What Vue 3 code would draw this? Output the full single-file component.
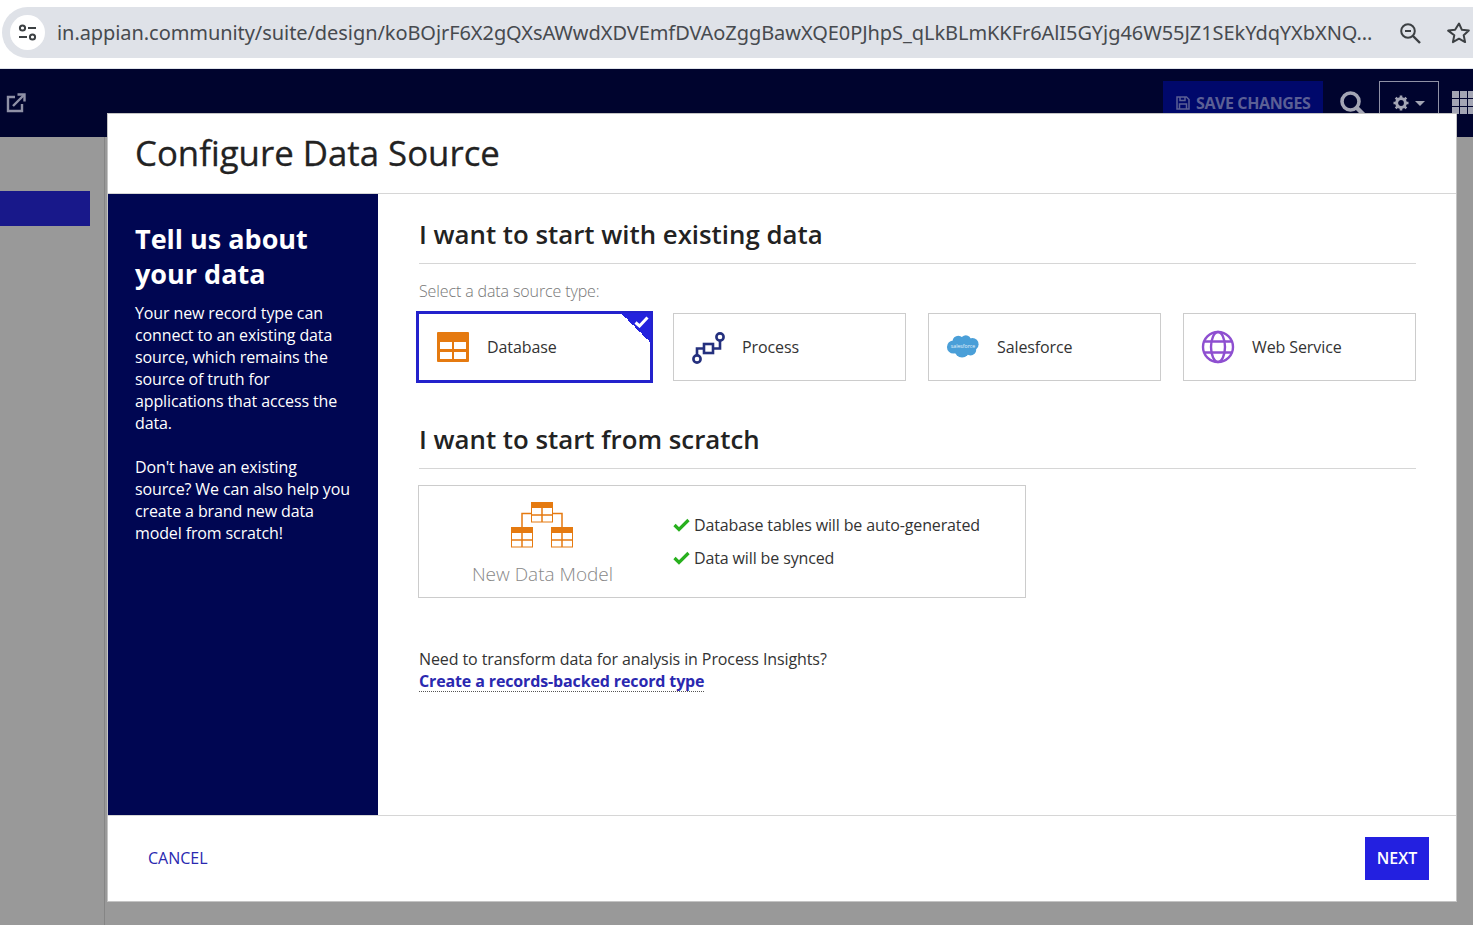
<script setup>
const sources = [
  { name: 'Database', icon: 'database', selected: true },
  { name: 'Process', icon: 'process', selected: false },
  { name: 'Salesforce', icon: 'salesforce', selected: false },
  { name: 'Web Service', icon: 'globe', selected: false }
];

const url = 'in.appian.community/suite/design/koBOjrF6X2gQXsAWwdXDVEmfDVAoZggBawXQE0PJhpS_qLkBLmKKFr6AlI5GYjg46W55JZ1SEkYdqYXbXNQ...';

const introOne = 'Your new record type can connect to an existing data source, which remains the source of truth for applications that access the data.';
const introTwo = "Don't have an existing source? We can also help you create a brand new data model from scratch!";

const benefits = ['Database tables will be auto-generated', 'Data will be synced'];

// small table glyphs of the data model icon
const modelTables = [
  { x: 20, y: 0 },
  { x: 0, y: 25 },
  { x: 40, y: 25 }
];
</script>

<template>
  <div class="page">
    <div class="browser">
      <div class="omnibox">
        <div class="site-btn">
          <svg width="20" height="18" viewBox="0 0 20 18" fill="none" stroke="#3c4043" stroke-width="2">
            <circle cx="4.5" cy="4" r="2.6" />
            <path d="M10 4h8" />
            <path d="M1 13h8" />
            <circle cx="14.5" cy="13" r="2.6" />
          </svg>
        </div>
        <div class="url">{{ url }}</div>
        <svg class="zoom-icon" width="24" height="24" viewBox="0 0 24 24" fill="none" stroke="#3c4043" stroke-width="2">
          <circle cx="10" cy="10" r="6.8" />
          <path d="M7 10h6" />
          <path d="M15 15l7 7" stroke-width="2.4" />
        </svg>
        <svg class="star-icon" width="24" height="24" viewBox="0 0 24 24" fill="none" stroke="#3c4043" stroke-width="2">
          <path d="M12 2.5l2.9 6.3 6.9.8-5.1 4.7 1.4 6.8-6.1-3.4-6.1 3.4 1.4-6.8L1.200 9.600l6.9-.8z" stroke-linejoin="round" />
        </svg>
      </div>
    </div>

    <header class="topbar">
      <svg class="open-icon" width="20" height="20" viewBox="0 0 20 20" fill="none" stroke="#8f91a6" stroke-width="2.400">
        <path d="M9 4H2v14h14v-7" />
        <path d="M7 13L18 2" />
        <path d="M11.500 1.500h7v7" />
      </svg>
      <div class="top-actions">
        <div class="save-btn">
          <svg width="14" height="14" viewBox="0 0 14 14" fill="none" stroke="#5b5f95" stroke-width="1.500">
            <path d="M1 1h9.500L13 3.500V13H1z" />
            <path d="M4 1v3.500h5V1M3.500 13V8h7v5" />
          </svg>
          <span>SAVE CHANGES</span>
        </div>
        <svg class="search-icon" width="28" height="28" viewBox="0 0 28 28" fill="none" stroke="#a3a5b4" stroke-width="3.600">
          <circle cx="11.500" cy="11.500" r="8.500" />
          <path d="M18 18l8 8" stroke-width="4.500" stroke-linecap="round" />
        </svg>
        <div class="gear-btn">
          <svg width="16" height="16" viewBox="0 0 16 16">
            <circle cx="8" cy="8" r="4.400" fill="none" stroke="#a3a5b4" stroke-width="3" />
            <path d="M8 .5v15M.5 8h15M2.700 2.700l10.600 10.600M13.300 2.700L2.700 13.300" stroke="#a3a5b4" stroke-width="2.600" stroke-dasharray="3 9 3" />
          </svg>
          <span class="caret"></span>
        </div>
        <div class="apps-grid">
          <i v-for="n in 9" :key="n"></i>
        </div>
      </div>
    </header>

    <main class="backdrop">
      <div class="side-rail">
        <div class="rail-active"></div>
      </div>
    </main>

    <section class="dialog">
      <div class="dialog-title">Configure Data Source</div>
      <div class="dialog-body">
        <aside class="intro">
          <h2>Tell us about your data</h2>
          <p>{{ introOne }}</p>
          <p>{{ introTwo }}</p>
        </aside>
        <div class="content">
          <h3 class="section-head">I want to start with existing data</h3>
          <div class="field-label">Select a data source type:</div>
          <div class="cards">
            <div v-for="s in sources" :key="s.name" class="card" :class="{ selected: s.selected }">
              <svg v-if="s.icon === 'database'" class="card-icon" width="34" height="34" viewBox="0 0 34 34">
                <rect x="1" y="2" width="32" height="30" rx="1" fill="#e57a10" />
                <rect x="4" y="12" width="12" height="7" fill="#fff" />
                <rect x="18" y="12" width="12" height="7" fill="#fff" />
                <rect x="4" y="22" width="12" height="7" fill="#fff" />
                <rect x="18" y="22" width="12" height="7" fill="#fff" />
              </svg>
              <svg v-else-if="s.icon === 'process'" class="card-icon" width="34" height="34" viewBox="0 0 34 34" fill="none" stroke="#24307e" stroke-width="2.600">
                <circle cx="6" cy="29" r="3.600" />
                <path d="M6 25v-6.500h7" />
                <rect x="13" y="14" width="9" height="9" />
                <path d="M22 18.500h7V11" />
                <circle cx="29" cy="7" r="3.600" />
              </svg>
              <svg v-else-if="s.icon === 'salesforce'" class="card-icon" width="36" height="34" viewBox="0 0 36 34">
                <g fill="#4a9fd8">
                  <circle cx="13" cy="11" r="6" />
                  <circle cx="21" cy="10" r="5.500" />
                  <circle cx="28" cy="14" r="6.500" />
                  <circle cx="8" cy="17" r="7" />
                  <circle cx="17" cy="20" r="8" />
                  <circle cx="26" cy="20" r="6" />
                </g>
                <text x="18" y="18.500" text-anchor="middle" class="sf-text">salesforce</text>
              </svg>
              <svg v-else class="card-icon" width="34" height="34" viewBox="0 0 34 34" fill="none" stroke="#8e4fd0" stroke-width="2.400">
                <circle cx="17" cy="17" r="15" />
                <ellipse cx="17" cy="17" rx="7" ry="15" />
                <path d="M3.500 11.500h27M3.500 22.500h27" />
              </svg>
              <span class="card-name">{{ s.name }}</span>
              <span v-if="s.selected" class="corner">
                <svg width="15" height="12" viewBox="0 0 15 12" fill="none" stroke="#fff" stroke-width="3">
                  <path d="M1.500 6.500L5.500 10l8-8.500" />
                </svg>
              </span>
            </div>
          </div>

          <h3 class="section-head second">I want to start from scratch</h3>
          <div class="model-card">
            <div class="model-left">
              <svg class="model-icon" width="62" height="46" viewBox="0 0 62 46">
                <path d="M20 11.500H11V25M42 11.500h9V25" fill="none" stroke="#e57a10" stroke-width="1.500" />
                <g v-for="t in modelTables" :key="t.x + '-' + t.y" :transform="`translate(${t.x} ${t.y})`">
                  <rect x="0.500" y="0.500" width="21" height="19.500" fill="#fff" stroke="#e57a10" />
                  <rect x="0" y="0" width="22" height="6" fill="#e57a10" />
                  <path d="M0.500 13h21M11 6v14" stroke="#e57a10" stroke-width="1.500" />
                </g>
              </svg>
              <div class="model-name">New Data Model</div>
            </div>
            <ul class="benefits">
              <li v-for="b in benefits" :key="b">
                <svg width="17" height="14" viewBox="0 0 17 14" fill="none" stroke="#28b01e" stroke-width="3.200">
                  <path d="M1.500 7l4.500 4.500L15.500 2" />
                </svg>
                <span>{{ b }}</span>
              </li>
            </ul>
          </div>

          <div class="transform">
            <div>Need to transform data for analysis in Process Insights?</div>
            <a class="records-link">Create a records-backed record type</a>
          </div>
        </div>
      </div>
      <footer class="dialog-foot">
        <a class="cancel">CANCEL</a>
        <button class="next">NEXT</button>
      </footer>
    </section>
  </div>
</template>

<style>
html, body {
  margin: 0;
  overflow: hidden;
}
</style>

<style scoped>
.page {
  position: relative;
  width: 1473px;
  height: 925px;
  overflow: hidden;
  display: flex;
  flex-direction: column;
  font-family: "Open Sans", "Noto Sans", sans-serif;
  background: #999;
}
.browser {
  height: 69px;
  flex: none;
  background: #fff;
  border-bottom: 1px solid #dfe3ea;
  box-sizing: border-box;
  padding: 7px 0 0 2px;
}
.omnibox {
  height: 51px;
  background: #dfe2e8;
  border-radius: 26px 0 0 26px;
  display: flex;
  align-items: center;
  padding-left: 8px;
}
.site-btn {
  width: 35px;
  height: 35px;
  border-radius: 50%;
  background: #fff;
  display: flex;
  align-items: center;
  justify-content: center;
  flex: none;
}
.url {
  width: 1317px;
  margin-left: 12px;
  flex: none;
  font-family: "Noto Sans", sans-serif;
  font-size: 20px;
  letter-spacing: -0.07px;
  color: #474a4f;
  white-space: nowrap;
}
.zoom-icon {
  margin-left: 24px;
  flex: none;
}
.star-icon {
  margin-left: 25px;
  flex: none;
}
.topbar {
  height: 68px;
  flex: none;
  background: #00042e;
  display: flex;
  justify-content: space-between;
  padding-top: 12px;
  box-sizing: border-box;
}
.open-icon {
  margin: 12px 0 0 6px;
}
.top-actions {
  display: flex;
  align-items: flex-start;
}
.save-btn {
  width: 160px;
  height: 44px;
  box-sizing: border-box;
  background: #00086b;
  display: flex;
  align-items: center;
  gap: 6px;
  padding-left: 13px;
  color: #5b5f95;
  font-size: 16px;
  font-weight: 700;
  letter-spacing: -0.4px;
}
.search-icon {
  margin: 9px 0 0 16px;
}
.gear-btn {
  width: 60px;
  height: 44px;
  margin-left: 12px;
  box-sizing: border-box;
  border: 1px solid #8f91a6;
  display: flex;
  align-items: center;
  justify-content: center;
  gap: 6px;
}
.caret {
  border-left: 5px solid transparent;
  border-right: 5px solid transparent;
  border-top: 5px solid #a3a5b4;
}
.apps-grid {
  margin: 10px 0 0 13px;
  display: grid;
  grid-template-columns: repeat(3, 7px);
  grid-auto-rows: 7px;
  gap: 1px;
  width: 21px;
}
.apps-grid i {
  background: #a3a5b4;
}
.backdrop {
  flex: 1;
  background: #999;
}
.side-rail {
  width: 105px;
  height: 100%;
  border-right: 1px solid #858585;
  padding-top: 54px;
  box-sizing: border-box;
}
.rail-active {
  width: 90px;
  height: 35px;
  background: #18188a;
}
.dialog {
  position: absolute;
  left: 108px;
  top: 114px;
  width: 1348px;
  height: 787px;
  background: #fff;
  box-shadow: 0 0 0 1px #c4c4c4;
  display: flex;
  flex-direction: column;
  color: #222;
}
.dialog-title {
  height: 80px;
  flex: none;
  box-sizing: border-box;
  border-bottom: 1px solid #d6d6d6;
  padding: 15px 0 0 27px;
  font-size: 34.8px;
  -webkit-text-stroke: 0.3px #222;
  line-height: 48px;
  color: #222;
}
.dialog-body {
  flex: 1;
  display: flex;
  min-height: 0;
}
.intro {
  width: 270px;
  flex: none;
  box-sizing: border-box;
  background: #000652;
  color: #fff;
  padding: 27px 25px 0 27px;
}
.intro h2 {
  margin: 0 0 11px;
  font-size: 27px;
  line-height: 35px;
  font-weight: 700;
}
.intro p {
  margin: 0 0 22px;
  font-size: 16px;
  line-height: 22px;
  letter-spacing: -0.12px;
}
.content {
  flex: 1;
  min-width: 0;
  padding: 0 40px 0 41px;
}
.section-head {
  margin: 0;
  padding: 23px 0 11px;
  border-bottom: 1px solid #d6d6d6;
  font-size: 25.8px;
  line-height: 35px;
  font-weight: 600;
  color: #222;
}
.section-head.second {
  padding-top: 0;
  margin-top: 41px;
}
.field-label {
  margin-top: 16px;
  font-size: 16px;
  line-height: 22px;
  color: #777;
  font-weight: 300;
  letter-spacing: -0.12px;
}
.cards {
  margin-top: 11px;
  margin-left: -1px;
  display: grid;
  grid-template-columns: repeat(4, 233px);
  gap: 22px;
}
.card {
  position: relative;
  height: 68px;
  box-sizing: border-box;
  border: 1px solid #ccc;
  display: flex;
  align-items: center;
  padding-left: 17px;
  background: #fff;
}
.card.selected {
  border: 3px solid #2322cc;
  margin: -2px;
  height: 72px;
  padding-left: 17px;
}
.card-icon {
  flex: none;
  width: 34px;
}
.card-name {
  margin-left: 17px;
  font-size: 16px;
  color: #333;
  letter-spacing: -0.1px;
}
.corner {
  position: absolute;
  top: -1px;
  right: -1px;
  width: 30px;
  height: 30px;
  background: linear-gradient(to top right, transparent 50%, #2322dd 50%);
}
.corner svg {
  position: absolute;
  top: 3px;
  right: 2px;
}
.sf-text {
  font-size: 5.5px;
  fill: #e4f1fa;
}
.model-card {
  margin-top: 16px;
  margin-left: -1px;
  width: 608px;
  height: 113px;
  box-sizing: border-box;
  border: 1px solid #ccc;
  display: flex;
}
.model-left {
  width: 247px;
  flex: none;
  display: flex;
  flex-direction: column;
  align-items: center;
  padding-top: 16px;
  box-sizing: border-box;
}
.model-icon {
  margin-left: -2px;
}
.model-name {
  margin-top: 13px;
  font-size: 19px;
  line-height: 26px;
  color: #888;
  font-weight: 300;
}
.benefits {
  list-style: none;
  margin: 0;
  padding: 28px 0 0 7px;
}
.benefits li {
  display: flex;
  align-items: center;
  gap: 4px;
  height: 22px;
  margin-bottom: 11px;
  font-size: 16px;
  color: #333;
  letter-spacing: -0.13px;
}
.transform {
  margin-top: 50px;
  font-size: 16px;
  line-height: 22px;
  color: #333;
  letter-spacing: -0.1px;
}
.records-link {
  display: inline-block;
  font-weight: 700;
  color: #2a28b0;
  line-height: 20px;
  letter-spacing: -0.13px;
  border-bottom: 1px dotted #555;
}
.dialog-foot {
  height: 86px;
  flex: none;
  box-sizing: border-box;
  border-top: 1px solid #d6d6d6;
  display: flex;
  align-items: center;
  justify-content: space-between;
  padding: 0 27px 0 40px;
}
.cancel {
  font-size: 16px;
  color: #2a28b0;
  margin-bottom: 2px;
}
.next {
  width: 64px;
  height: 43px;
  border: none;
  background: #2320e0;
  color: #fff;
  font-family: inherit;
  font-size: 16px;
  font-weight: 600;
  padding: 0 0 2px;
}
</style>
